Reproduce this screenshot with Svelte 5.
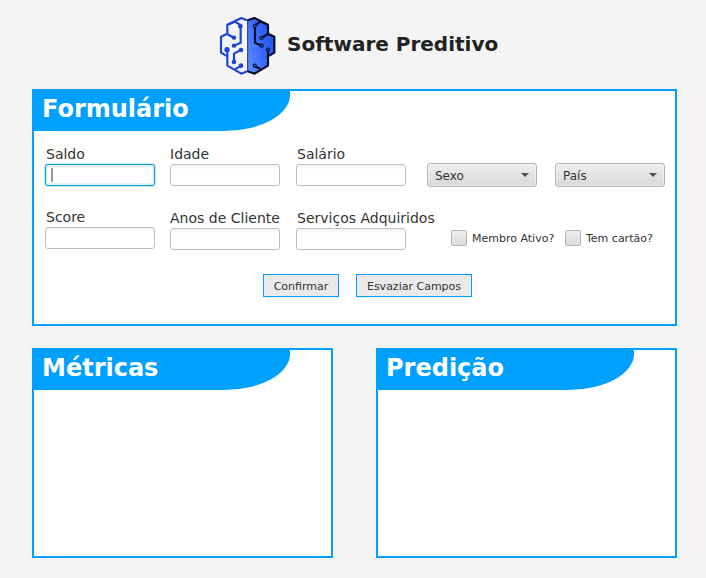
<script>
  const rowOne = ['Saldo', 'Idade', 'Salário'];
  const rowTwo = ['Score', 'Anos de Cliente', 'Serviços Adquiridos'];
  const combos = ['Sexo', 'País'];
  const checks = ['Membro Ativo?', 'Tem cartão?'];
</script>

<div class="window">
  <header>
    <svg class="logo" width="70" height="70" viewBox="0 0 210 210" fill="none" stroke-width="6.5" stroke-linejoin="round">
      <defs>
        <linearGradient id="half" x1="0" y1="0.7" x2="1" y2="0.2">
          <stop offset="0" stop-color="#5c88ff" />
          <stop offset="0.5" stop-color="#3566fb" />
          <stop offset="1" stop-color="#2450ee" />
        </linearGradient>
      </defs>
      <g stroke="#1f43d6">
        <path d="M105 31 88 24 46 44V71L27 80V128L46 139V167L88 191 105 184M48 44 68 35 86 45V98L66 107M46 72 66 84M46 120V142M88 119 66 131V156M86 168 67 179" />
        <g fill="#1f43d6" stroke="none">
          <circle cx="85" cy="49" r="7" /><circle cx="66" cy="83" r="6.5" /><circle cx="66" cy="107" r="6.5" />
          <circle cx="45" cy="119" r="8" /><circle cx="87" cy="120" r="7" /><circle cx="66" cy="156" r="7" /><circle cx="87" cy="167" r="7" />
        </g>
      </g>
      <path d="M107 31 127 24 168 44V71L187 80V128L168 139V167L128 191 107 184Z" fill="url(#half)" />
      <g stroke="#080d28">
        <path d="M107 28V186" stroke="#16338f" stroke-width="3" />
        <path d="M107 31 127 24 168 44V71L187 80V128L168 139V167L128 191 107 184M168 44 147 35 129 45V98L149 107M168 72 148 84M168 120V142M128 168 148 179" />
        <g fill="#3566f8" stroke-width="3.5">
          <circle cx="128" cy="48" r="4.5" /><circle cx="148" cy="84" r="4.5" /><circle cx="149" cy="107" r="4.5" />
          <circle cx="168" cy="119" r="4.5" /><circle cx="128" cy="167" r="4.5" />
        </g>
      </g>
    </svg>
    <h1>Software Preditivo</h1>
  </header>

  <section class="panel form">
    <h2>Formulário</h2>
    <div class="row first">
      {#each rowOne as label, i}
        <label class="field"><span>{label}</span><span class="input" class:focused={i === 0}></span></label>
      {/each}
      {#each combos as name}
        <button class="combo">{name}<i></i></button>
      {/each}
    </div>
    <div class="row second">
      {#each rowTwo as label}
        <label class="field"><span>{label}</span><span class="input"></span></label>
      {/each}
      {#each checks as name}
        <label class="check"><i></i><span>{name}</span></label>
      {/each}
    </div>
    <div class="actions">
      <button>Confirmar</button>
      <button>Esvaziar Campos</button>
    </div>
  </section>

  <div class="results">
    <section class="panel"><h2>Métricas</h2></section>
    <section class="panel"><h2>Predição</h2></section>
  </div>
</div>

<style>
  :global(body) { background: #f4f4f4; }
  .window {
    box-sizing: border-box;
    width: 706px;
    height: 578px;
    padding: 10px 29px 0 32px;
    overflow: hidden;
    background: #f4f4f4;
    color: #333;
    font-family: "DejaVu Sans", sans-serif;
    font-size: 14px;
  }
  header { display: flex; height: 79px; padding-left: 180px; }
  h1 { margin: 22px 0 0 5px; font-size: 20px; line-height: 24px; color: #222; white-space: nowrap; }
  .panel { box-sizing: border-box; background: #fff; border: 2px solid #00a0ff; }
  h2 {
    box-sizing: border-box;
    width: 256px;
    height: 40px;
    margin: 0;
    padding-left: 8px;
    border-bottom-right-radius: 66px 36px;
    background: #00a0ff;
    color: #fff;
    font-size: 24px;
    line-height: 36px;
  }
  .form { height: 237px; }
  .row { display: flex; padding-left: 11px; }
  .first { height: 63px; padding-top: 15px; box-sizing: border-box; }
  .second { height: 64px; padding-top: 16px; box-sizing: border-box; }
  .field { width: 110px; margin-right: 15px; white-space: nowrap; }
  .field:nth-child(2) { margin-right: 16px; }
  .field:nth-child(3) { margin-right: 21px; }
  .second .field:first-child { margin-top: -1px; }
  .field span:first-child { display: block; height: 18px; padding-left: 1px; line-height: 17px; }
  .field:nth-child(2) span:first-child { padding-left: 0; }
  .input {
    display: block;
    box-sizing: border-box;
    height: 22px;
    border: 1px solid #c0c0c0;
    border-radius: 3px;
    background: linear-gradient(#f2f2f2, #fff 5px);
  }
  .focused {
    padding: 3px 0 0 5px;
    border-color: #039ed3;
    background: #fff;
    box-shadow: 0 0 0 1px #c5e8f5, inset 0 0 0 2px #e2f2f9;
  }
  .focused::before { content: ""; display: block; width: 2px; height: 14px; background: #999; }
  button { box-sizing: border-box; margin: 0; color: #333; font-family: inherit; white-space: nowrap; }
  .combo {
    display: flex;
    align-items: center;
    justify-content: space-between;
    width: 110px;
    height: 24px;
    margin: 17px 18px 0 0;
    flex: none;
    padding: 1px 7px 0 7px;
    border: 1px solid #b5b5b5;
    border-radius: 3px;
    background: linear-gradient(#efefef, #d9d9d9);
    box-shadow: inset 0 0 0 1px #f0f0f0aa;
    font-size: 12px;
  }
  .combo:last-child { margin-right: 0; }
  .combo i { margin-top: -2px; border: 4px solid transparent; border-top-color: #4d4d4d; border-bottom: 0; }
  .check { display: flex; gap: 5px; height: 16px; margin-top: 20px; font-size: 11px; line-height: 18px; white-space: nowrap; }
  .check:nth-child(4) { width: 114px; margin-left: 24px; }
  .check i {
    box-sizing: border-box;
    width: 16px;
    height: 16px;
    flex: none;
    border: 1px solid #b5b5b5;
    border-radius: 2px;
    background: linear-gradient(#f0f0f0, #dcdcdc);
  }
  .actions { display: flex; gap: 17px; padding: 16px 0 0 229px; }
  .actions button {
    width: 76px;
    height: 23px;
    padding: 1px 0 0;
    border: 1px solid #00a0ff;
    background: #eaeaea;
    box-shadow: 0 1px 0 #f3f3f3;
    font-size: 11px;
  }
  .actions button:last-child { width: 116px; }
  .results { display: flex; gap: 43px; padding-top: 22px; }
  .results .panel { width: 301px; height: 210px; }
</style>
